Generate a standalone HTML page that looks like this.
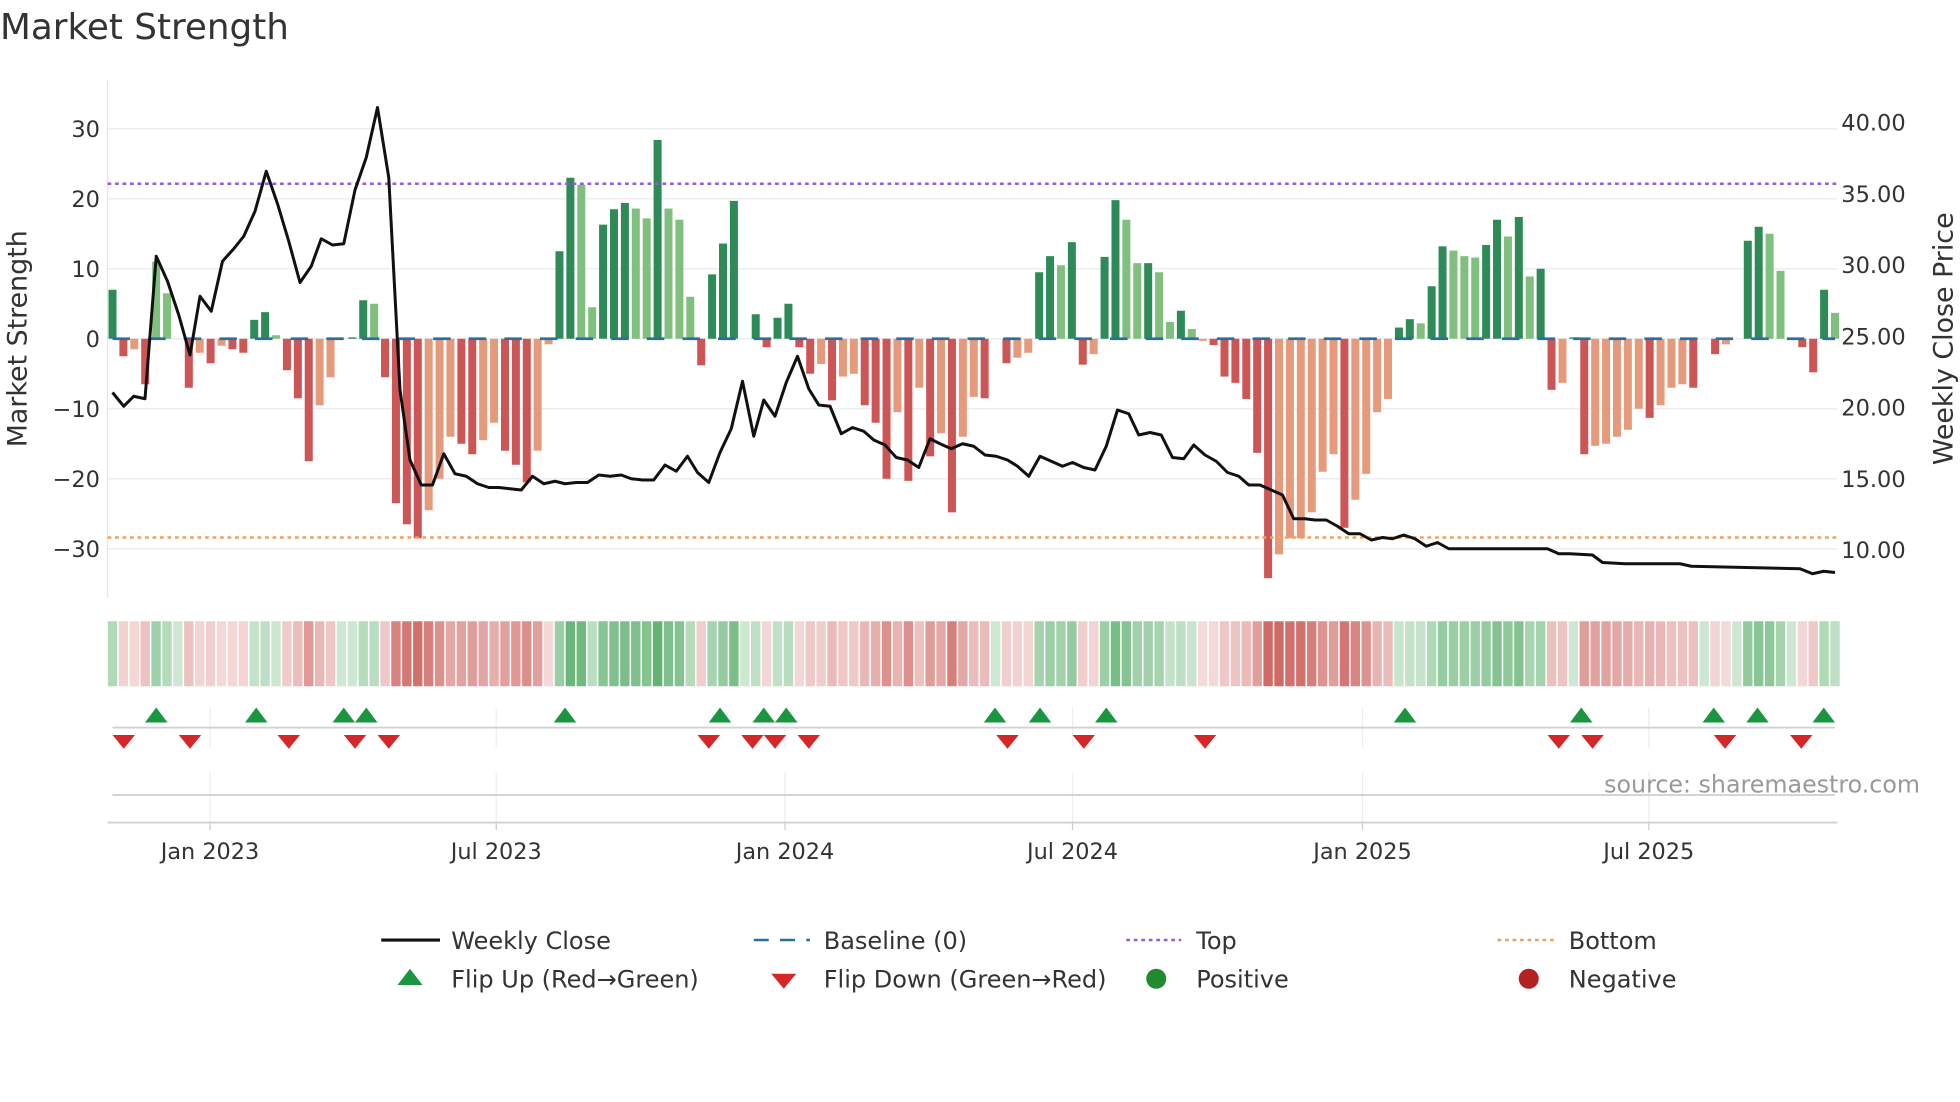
<!DOCTYPE html>
<html><head><meta charset="utf-8"><style>
html,body{margin:0;padding:0;background:#fff;width:1960px;height:1102px;overflow:hidden}
svg{display:block}
text{font-family:"DejaVu Sans","Liberation Sans",sans-serif;fill:#333}
</style></head><body>
<svg id="s" width="1960" height="1102" viewBox="0 0 1568 881.6" xmlns="http://www.w3.org/2000/svg">
<text x="0" y="31" font-size="28.6" fill="#333">Market Strength</text>
<g id="grid"></g>
<g id="bars"></g>
<g id="over"></g>
<text transform="translate(21,271) rotate(-90)" text-anchor="middle" font-size="21.5">Market Strength</text>
<text transform="translate(1562,271) rotate(-90)" text-anchor="middle" font-size="21.5">Weekly Close Price</text>
<text x="1536" y="634" text-anchor="end" font-size="19" style="fill:#999">source: sharemaestro.com</text>
<g font-size="19.2">
<line x1="305" y1="752" x2="352" y2="752" stroke="#111" stroke-width="2.5"/>
<text x="361" y="759">Weekly Close</text>
<line x1="603" y1="752" x2="648" y2="752" stroke="#2a6f9e" stroke-width="2" stroke-dasharray="12 9"/>
<text x="659" y="759">Baseline (0)</text>
<line x1="901" y1="752" x2="945" y2="752" stroke="#9b59d6" stroke-width="2" stroke-dasharray="3 3"/>
<text x="957" y="759">Top</text>
<line x1="1198" y1="752" x2="1243" y2="752" stroke="#f0a060" stroke-width="2" stroke-dasharray="3 3"/>
<text x="1255" y="759">Bottom</text>
<polygon points="328,775 338,788 318,788" fill="#1a9641"/>
<text x="361" y="790">Flip Up (Red→Green)</text>
<polygon points="617,779 637,779 627,791" fill="#d62728"/>
<text x="659" y="790">Flip Down (Green→Red)</text>
<circle cx="925" cy="783" r="8" fill="#1f8a2e"/>
<text x="957" y="790">Positive</text>
<circle cx="1223" cy="783" r="8" fill="#b22222"/>
<text x="1255" y="790">Negative</text>
</g>
</svg>
<script>
var NS="http://www.w3.org/2000/svg";
function el(p,t,a,txt){var e=document.createElementNS(NS,t);for(var k in a)e.setAttribute(k,a[k]);if(txt!=null)e.textContent=txt;document.getElementById(p).appendChild(e);return e;}
var yl=function(v){return 271-5.6*v};
[30,20,10,0,-10,-20,-30].forEach(function(v){
 el('grid','line',{x1:86,x2:1470,y1:yl(v),y2:yl(v),stroke:'#eceef4','stroke-width':1.2});
 el('grid','text',{x:80,y:yl(v)+6.5,'text-anchor':'end','font-size':18},(v<0?'\u2212'+(-v):v));
});
[40,35,30,25,20,15,10].forEach(function(v){
 var y=269-11.4*(v-25);
 el('grid','text',{x:1473,y:y+6.5,'font-size':18},v.toFixed(2));
});
el('grid','line',{x1:86,x2:86,y1:65,y2:478,stroke:'#e4e6ea','stroke-width':1});
[168,397,628,858,1090,1319].forEach(function(x){
 el('grid','line',{x1:x,x2:x,y1:566,y2:598,stroke:'#eee','stroke-width':1});
 el('grid','line',{x1:x,x2:x,y1:618,y2:658,stroke:'#eee','stroke-width':1});
 el('grid','line',{x1:x,x2:x,y1:658,y2:664,stroke:'#ccc','stroke-width':1});
});
el('grid','line',{x1:90,x2:1468,y1:582,y2:582,stroke:'#cfd2d6','stroke-width':1.5});
el('grid','line',{x1:90,x2:1468,y1:636,y2:636,stroke:'#cfd2d6','stroke-width':1.5});
el('grid','line',{x1:86,x2:1470,y1:658,y2:658,stroke:'#cfd2d6','stroke-width':1.5});
[['Jan 2023',168],['Jul 2023',397],['Jan 2024',628],['Jul 2024',858],['Jan 2025',1090],['Jul 2025',1319]].forEach(function(a){
 el('grid','text',{x:a[1],y:687,'text-anchor':'middle','font-size':17.9},a[0]);
});
var B=[[7,1],[-2.5,1],[-1.5,0],[-6.5,1],[11,0],[6.5,0],[0,0],[-7,1],[-2,0],[-3.5,1],[-1,0],[-1.5,1],[-2,1],[2.7,1],[3.8,1],[0.5,0],[-4.5,1],[-8.5,1],[-17.5,1],[-9.5,0],[-5.5,0],[0,0],[0.2,1],[5.5,1],[5,0],[-5.5,1],[-23.5,1],[-26.5,1],[-28.5,1],[-24.5,0],[-20,0],[-14,0],[-15,1],[-16.5,1],[-14.5,0],[-12,0],[-16,1],[-18,1],[-20.5,1],[-16,0],[-0.8,0],[12.5,1],[23,1],[22,0],[4.5,0],[16.3,1],[18.5,1],[19.4,1],[18.6,0],[17.2,0],[28.4,1],[18.6,0],[17,0],[6,0],[-3.8,1],[9.2,1],[13.6,1],[19.7,1],[0,0],[3.5,1],[-1.2,1],[3,1],[5,1],[-1.2,1],[-5,1],[-3.6,0],[-8.8,1],[-5.4,0],[-5,0],[-9.5,1],[-12,1],[-20,1],[-10.5,0],[-20.3,1],[-7,0],[-16.8,1],[-13.5,0],[-24.8,1],[-14,0],[-8.3,0],[-8.5,1],[0,0],[-3.5,1],[-2.7,0],[-2,0],[9.5,1],[11.8,1],[10.5,0],[13.8,1],[-3.7,1],[-2.2,0],[11.7,1],[19.8,1],[17,0],[10.8,0],[10.8,1],[9.5,0],[2.4,0],[4,1],[1.4,0],[-0.3,0],[-0.9,1],[-5.4,1],[-6.3,1],[-8.6,1],[-16.3,1],[-34.2,1],[-30.8,0],[-28.5,0],[-28.5,0],[-24.8,0],[-19,0],[-16.5,0],[-27,1],[-23,0],[-19.3,0],[-10.5,0],[-8.6,0],[1.6,1],[2.8,1],[2.2,0],[7.5,1],[13.2,1],[12.6,0],[11.8,0],[11.6,0],[13.4,1],[17,1],[14.6,0],[17.4,1],[8.9,0],[10,1],[-7.3,1],[-6.3,0],[0.2,1],[-16.5,1],[-15.3,0],[-15,0],[-14,0],[-13,0],[-10,0],[-11.3,1],[-9.5,0],[-7,0],[-6.5,0],[-7,1],[0,0],[-2.2,1],[-0.8,0],[0,0],[14,1],[16,1],[15,0],[9.7,0],[0,0],[-1.2,1],[-4.8,1],[7,1],[3.7,0]];
var n=B.length,x0=90,x1=1468,dx=(x1-x0)/(n-1);
B.forEach(function(b,i){
 var x=x0+i*dx,v=b[0];
 var c=v>=0?(b[1]?'#2e8a57':'#80bf7e'):(b[1]?'#cc5555':'#e59a7c');
 if(v!=0){var y=Math.min(yl(v),271),h=Math.abs(5.6*v);el('bars','rect',{x:x-3.2,y:y,width:6.4,height:h,fill:c});}
 var hc=v>=0?'rgba(60,160,80,'+(0.25+0.55*Math.min(1,Math.abs(v)/25))+')':'rgba(200,80,75,'+(0.2+0.65*Math.min(1,Math.abs(v)/30))+')';
 el('bars','rect',{x:x-dx/2+0.6,y:497,width:dx-1.2,height:52,fill:hc});
});
el('over','line',{x1:90,x2:1468,y1:271,y2:271,stroke:'#2a6f9e','stroke-width':2.2,'stroke-dasharray':'14 14.5'});
el('over','line',{x1:86,x2:1470,y1:147,y2:147,stroke:'#9b59d6','stroke-width':2,'stroke-dasharray':'3 3'});
el('over','line',{x1:86,x2:1470,y1:430,y2:430,stroke:'#f0a060','stroke-width':2,'stroke-dasharray':'3 3'});
var P=[[90,314],[99,325],[107,317],[116,319],[125,205],[134,225],[143,252],[152,284],[160,237],[169,249],[178,209],[187,199],[195,189],[204,169],[213,137],[222,163],[231,193],[240,226],[249,213],[257,191],[266,196],[275,195],[284,152],[293,126],[302,86],[311,142],[320,312],[328,368],[337,388],[346,388],[355,363],[364,379],[373,381],[382,387],[391,390],[399,390],[408,391],[417,392],[426,381],[435,387],[444,385],[452,387],[461,386],[470,386],[479,380],[488,381],[497,380],[505,383],[514,384],[523,384],[532,372],[541,377],[550,365],[558,378],[567,386],[576,362],[585,343],[594,305],[603,349],[611,320],[620,333],[629,306],[638,285],[647,311],[655,324],[664,325],[673,347],[682,342],[691,345],[699,352],[708,356],[717,366],[726,368],[735,374],[744,351],[752,355],[761,359],[770,355],[779,357],[788,364],[797,365],[806,368],[814,373],[823,381],[832,365],[841,369],[850,373],[858,370],[867,374],[876,376],[885,357],[894,328],[903,331],[911,348],[920,346],[929,348],[938,366],[947,367],[955,356],[964,364],[973,369],[982,378],[991,381],[999,388],[1008,388],[1017,392],[1026,396],[1035,415],[1044,415],[1052,416],[1061,416],[1070,421],[1079,427],[1088,427],[1097,432],[1106,430],[1114,431],[1123,428],[1132,431],[1141,437],[1150,434],[1159,439],[1238,439],[1247,443],[1256,443],[1274,444],[1282,450],[1300,451],[1318,451],[1344,451],[1353,453],[1440,455],[1450,459],[1459,457],[1468,458]];
el('over','polyline',{points:P.map(function(p){return p.join(',')}).join(' '),fill:'none',stroke:'#111','stroke-width':2.4,'stroke-linejoin':'round'});
[125,205,275,293,452,576,611,629,796,832,885,1124,1265,1371,1406,1459].forEach(function(x){
 el('over','polygon',{points:(x)+',566 '+(x+9)+',578 '+(x-9)+',578',fill:'#1a9641'});
});
[99,152,231,284,311,567,602,620,647,806,867,964,1247,1274,1380,1441].forEach(function(x){
 el('over','polygon',{points:(x-9)+',588 '+(x+9)+',588 '+x+',599',fill:'#d62728'});
});
</script>
</body></html>
